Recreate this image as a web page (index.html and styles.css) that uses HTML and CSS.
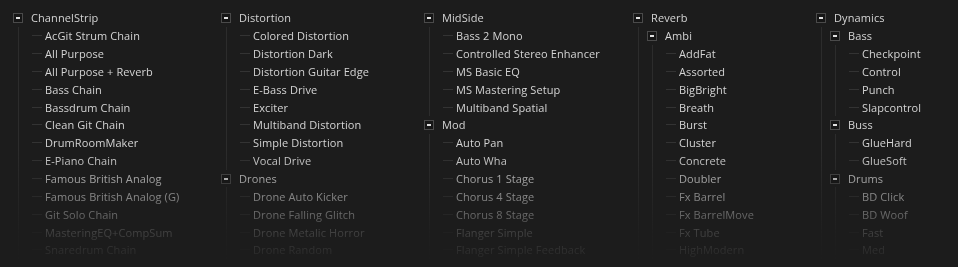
FILE: index.html
```html
<!DOCTYPE html>
<html lang="en">
<head>
  <meta charset="UTF-8">
  <meta name="viewport" content="width=device-width, initial-scale=1.0">
  <title>Preset Browser</title>
  <link rel="stylesheet" href="styles.css">
</head>
<body>
  <div class="browser">
    <div class="column col-1">
      <ul class="tree">
        <li class="folder">
          <div class="row"><span class="box"></span><span class="label">ChannelStrip</span></div>
          <ul>
            <li><div class="row"><span class="tick"></span><span class="label">AcGit Strum Chain</span></div></li>
            <li><div class="row"><span class="tick"></span><span class="label">All Purpose</span></div></li>
            <li><div class="row"><span class="tick"></span><span class="label">All Purpose + Reverb</span></div></li>
            <li><div class="row"><span class="tick"></span><span class="label">Bass Chain</span></div></li>
            <li><div class="row"><span class="tick"></span><span class="label">Bassdrum Chain</span></div></li>
            <li><div class="row"><span class="tick"></span><span class="label">Clean Git Chain</span></div></li>
            <li><div class="row"><span class="tick"></span><span class="label">DrumRoomMaker</span></div></li>
            <li><div class="row"><span class="tick"></span><span class="label">E-Piano Chain</span></div></li>
            <li><div class="row"><span class="tick"></span><span class="label">Famous British Analog</span></div></li>
            <li><div class="row"><span class="tick"></span><span class="label">Famous British Analog (G)</span></div></li>
            <li><div class="row"><span class="tick"></span><span class="label">Git Solo Chain</span></div></li>
            <li><div class="row"><span class="tick"></span><span class="label">MasteringEQ+CompSum</span></div></li>
            <li><div class="row"><span class="tick"></span><span class="label">Snaredrum Chain</span></div></li>
          </ul>
        </li>
      </ul>
    </div>

    <div class="column col-2">
      <ul class="tree">
        <li class="folder">
          <div class="row"><span class="box"></span><span class="label">Distortion</span></div>
          <ul>
            <li><div class="row"><span class="tick"></span><span class="label">Colored Distortion</span></div></li>
            <li><div class="row"><span class="tick"></span><span class="label">Distortion Dark</span></div></li>
            <li><div class="row"><span class="tick"></span><span class="label">Distortion Guitar Edge</span></div></li>
            <li><div class="row"><span class="tick"></span><span class="label">E-Bass Drive</span></div></li>
            <li><div class="row"><span class="tick"></span><span class="label">Exciter</span></div></li>
            <li><div class="row"><span class="tick"></span><span class="label">Multiband Distortion</span></div></li>
            <li><div class="row"><span class="tick"></span><span class="label">Simple Distortion</span></div></li>
            <li><div class="row"><span class="tick"></span><span class="label">Vocal Drive</span></div></li>
          </ul>
        </li>
        <li class="folder">
          <div class="row"><span class="box"></span><span class="label">Drones</span></div>
          <ul>
            <li><div class="row"><span class="tick"></span><span class="label">Drone Auto Kicker</span></div></li>
            <li><div class="row"><span class="tick"></span><span class="label">Drone Falling Glitch</span></div></li>
            <li><div class="row"><span class="tick"></span><span class="label">Drone Metalic Horror</span></div></li>
            <li><div class="row"><span class="tick"></span><span class="label">Drone Random</span></div></li>
          </ul>
        </li>
      </ul>
    </div>

    <div class="column col-3">
      <ul class="tree">
        <li class="folder">
          <div class="row"><span class="box"></span><span class="label">MidSide</span></div>
          <ul>
            <li><div class="row"><span class="tick"></span><span class="label">Bass 2 Mono</span></div></li>
            <li><div class="row"><span class="tick"></span><span class="label">Controlled Stereo Enhancer</span></div></li>
            <li><div class="row"><span class="tick"></span><span class="label">MS Basic EQ</span></div></li>
            <li><div class="row"><span class="tick"></span><span class="label">MS Mastering Setup</span></div></li>
            <li><div class="row"><span class="tick"></span><span class="label">Multiband Spatial</span></div></li>
          </ul>
        </li>
        <li class="folder">
          <div class="row"><span class="box"></span><span class="label">Mod</span></div>
          <ul>
            <li><div class="row"><span class="tick"></span><span class="label">Auto Pan</span></div></li>
            <li><div class="row"><span class="tick"></span><span class="label">Auto Wha</span></div></li>
            <li><div class="row"><span class="tick"></span><span class="label">Chorus 1 Stage</span></div></li>
            <li><div class="row"><span class="tick"></span><span class="label">Chorus 4 Stage</span></div></li>
            <li><div class="row"><span class="tick"></span><span class="label">Chorus 8 Stage</span></div></li>
            <li><div class="row"><span class="tick"></span><span class="label">Flanger Simple</span></div></li>
            <li><div class="row"><span class="tick"></span><span class="label">Flanger Simple Feedback</span></div></li>
          </ul>
        </li>
      </ul>
    </div>

    <div class="column col-4">
      <ul class="tree">
        <li class="folder">
          <div class="row"><span class="box"></span><span class="label">Reverb</span></div>
          <ul>
            <li class="folder">
              <div class="row"><span class="box"></span><span class="label">Ambi</span></div>
              <ul>
                <li><div class="row"><span class="tick"></span><span class="label">AddFat</span></div></li>
                <li><div class="row"><span class="tick"></span><span class="label">Assorted</span></div></li>
                <li><div class="row"><span class="tick"></span><span class="label">BigBright</span></div></li>
                <li><div class="row"><span class="tick"></span><span class="label">Breath</span></div></li>
                <li><div class="row"><span class="tick"></span><span class="label">Burst</span></div></li>
                <li><div class="row"><span class="tick"></span><span class="label">Cluster</span></div></li>
                <li><div class="row"><span class="tick"></span><span class="label">Concrete</span></div></li>
                <li><div class="row"><span class="tick"></span><span class="label">Doubler</span></div></li>
                <li><div class="row"><span class="tick"></span><span class="label">Fx Barrel</span></div></li>
                <li><div class="row"><span class="tick"></span><span class="label">Fx BarrelMove</span></div></li>
                <li><div class="row"><span class="tick"></span><span class="label">Fx Tube</span></div></li>
                <li><div class="row"><span class="tick"></span><span class="label">HighModern</span></div></li>
              </ul>
            </li>
          </ul>
        </li>
      </ul>
    </div>

    <div class="column col-5">
      <ul class="tree">
        <li class="folder">
          <div class="row"><span class="box"></span><span class="label">Dynamics</span></div>
          <ul>
            <li class="folder">
              <div class="row"><span class="box"></span><span class="label">Bass</span></div>
              <ul>
                <li><div class="row"><span class="tick"></span><span class="label">Checkpoint</span></div></li>
                <li><div class="row"><span class="tick"></span><span class="label">Control</span></div></li>
                <li><div class="row"><span class="tick"></span><span class="label">Punch</span></div></li>
                <li><div class="row"><span class="tick"></span><span class="label">Slapcontrol</span></div></li>
              </ul>
            </li>
            <li class="folder">
              <div class="row"><span class="box"></span><span class="label">Buss</span></div>
              <ul>
                <li><div class="row"><span class="tick"></span><span class="label">GlueHard</span></div></li>
                <li><div class="row"><span class="tick"></span><span class="label">GlueSoft</span></div></li>
              </ul>
            </li>
            <li class="folder">
              <div class="row"><span class="box"></span><span class="label">Drums</span></div>
              <ul>
                <li><div class="row"><span class="tick"></span><span class="label">BD Click</span></div></li>
                <li><div class="row"><span class="tick"></span><span class="label">BD Woof</span></div></li>
                <li><div class="row"><span class="tick"></span><span class="label">Fast</span></div></li>
                <li><div class="row"><span class="tick"></span><span class="label">Med</span></div></li>
              </ul>
            </li>
          </ul>
        </li>
      </ul>
    </div>
  </div>
</body>
</html>
```
FILE: styles.css
```css
/* General Styles */
html,
body {
  margin: 0;
  padding: 0;
  background-color: #1c1c1c;
  height: 100%;
  overflow: hidden;
}

body {
  font-family: "Open Sans", "Liberation Sans", sans-serif;
  font-size: 11px;
  color: #d4d4d4;
}

/* Five tree columns, faded out toward the bottom edge */
.browser {
  display: grid;
  grid-template-columns: 208px 203px 209px 183px 1fr;
  padding: 9px 0 0 13px;
  height: 267px;
  box-sizing: border-box;
  -webkit-mask-image: linear-gradient(to bottom, #000 150px, rgba(0, 0, 0, 0.72) 180px, rgba(0, 0, 0, 0.4) 215px, rgba(0, 0, 0, 0.2) 232px, rgba(0, 0, 0, 0.1) 250px, rgba(0, 0, 0, 0.03) 267px);
  mask-image: linear-gradient(to bottom, #000 150px, rgba(0, 0, 0, 0.72) 180px, rgba(0, 0, 0, 0.4) 215px, rgba(0, 0, 0, 0.2) 232px, rgba(0, 0, 0, 0.1) 250px, rgba(0, 0, 0, 0.03) 267px);
}

.tree,
.tree ul {
  list-style: none;
  margin: 0;
  padding: 0;
}

/* children hang off a line under the parent's box */
.tree ul {
  margin-left: 5px;
  padding-left: 8px;
  border-left: 1px solid #2c2c2c;
}

.row {
  display: flex;
  align-items: center;
  height: 17.85px;
  white-space: nowrap;
}

.box {
  position: relative;
  flex: none;
  width: 10px;
  height: 10px;
  margin-right: 8px;
  box-sizing: border-box;
  border: 1px solid #4a4a4a;
  background-color: #161616;
}

.box::after {
  content: "";
  position: absolute;
  left: 2px;
  right: 2px;
  top: 3px;
  height: 2px;
  background-color: #e0e0e0;
}

.tick {
  flex: none;
  width: 10px;
  height: 1px;
  margin: 0 3px 0 5px;
  background-color: #333;
}

.label {
  line-height: 1;
  letter-spacing: 0.1px;
}
```
